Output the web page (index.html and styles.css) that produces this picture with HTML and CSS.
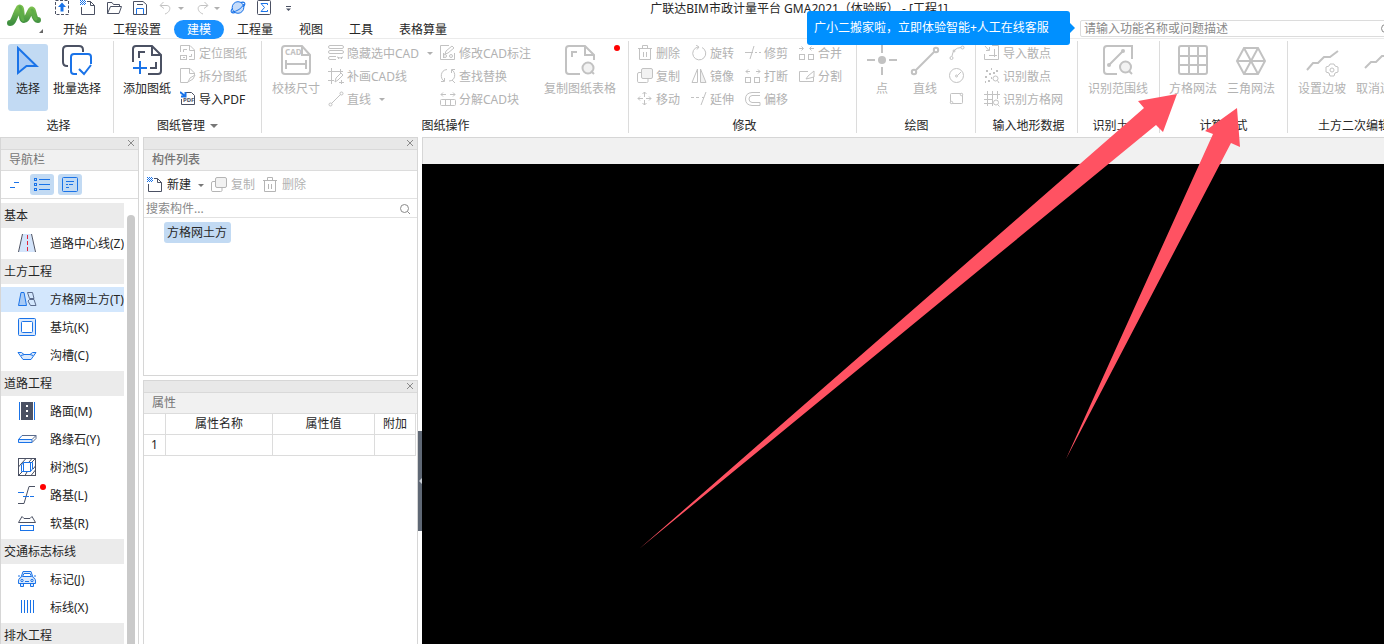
FILE: index.html
```html
<!DOCTYPE html>
<html lang="zh-CN">
<head>
<meta charset="utf-8">
<title>广联达BIM市政计量平台 GMA2021</title>
<link rel="stylesheet" href="styles.css">
</head>
<body>
<svg class="defs" aria-hidden="true">
  <symbol id="new" viewBox="0 0 16 16"><path d="M1.500 7V14.500H14.500V5.500L10.500 1.500H7"/><path d="M10.500 1.500V5.500H14.500"/><path class="b" d="M0 .5h5M1 1.500h5M0 2.500h5M1 3.500h5M0 4.500h5" stroke-dasharray="1 1"/></symbol>
  <symbol id="copy" viewBox="0 0 16 16"><path d="M5 4.500H2Q.5 4.500 .5 6V13.500Q.5 14.500 2 14.500H9.500Q11 14.500 11 13.500V11"/><rect class="pale" x="4.500" y=".5" width="11" height="10" rx="1.500"/></symbol>
  <symbol id="trash" viewBox="0 0 16 16"><path d="M1 3.500H15M5.500 3.500V.5H10.500V3.500M2.500 3.500V14.500H13.500V3.500M6.500 7V12M9.500 7V12"/></symbol>
  <symbol id="close" viewBox="0 0 8 8"><path d="M1 1L7 7M7 1L1 7"/></symbol>
  <symbol id="lens" viewBox="0 0 12 12"><circle cx="5.500" cy="5.500" r="4"/><path d="M8.500 8.500L11 11"/></symbol>
</svg>

<header class="header">
  <div class="brand">
    <svg width="36" height="26" viewBox="0 0 36 26" aria-label="Logo">
      <defs><linearGradient id="g" x1="0" y1="0" x2="0" y2="1"><stop offset="0" stop-color="#7cc04f"/><stop offset="1" stop-color="#3f8f40"/></linearGradient></defs>
      <path d="M4 21C8 21 9 12 13 6C17 3 14 18 18 18C21 18 22 13 25 8C28 5 27 18 32 18" fill="none" stroke="url(#g)" stroke-width="6" stroke-linecap="round" stroke-linejoin="round"/>
      <path d="M14 5C16 7 15 15 17 18M26 8C28 9 27 15 30 17" fill="none" stroke="#5fae48" stroke-width="3" stroke-linecap="round"/>
    </svg>
    <i class="corner"></i>
  </div>
  <div class="head-main">
    <div class="titlebar">
      <nav class="quick">
        <button aria-label="上传"><svg class="ic dark" viewBox="0 0 16 16"><rect x="1.500" y=".5" width="13" height="14" stroke-dasharray="3 1.500"/><path class="solid" d="M8 2.500L12 7H9.500V11.500H6.500V7H4Z"/></svg></button>
        <button aria-label="新建"><svg class="ic dark"><use href="#new"/></svg></button>
        <button aria-label="打开"><svg class="ic dark" viewBox="0 0 16 16"><path d="M1.500 13.500V2.500H6L7.500 4.500H13.500V6.500M1.500 13.500L4.500 6.500H15.500L13 13.500Z"/></svg></button>
        <button aria-label="保存"><svg class="ic dark" viewBox="0 0 16 16"><path d="M1.500 1.500H11L14.500 4.500V14.500H1.500ZM5 4.500H11"/><path class="b" d="M4.500 14V8.500H11.500V14"/></svg></button>
        <button aria-label="撤销" class="split off"><svg class="ic" viewBox="0 0 16 16"><path d="M5.500 2L2 5.500L6 8.500M2.500 5.500H8C13.500 5 13 12 7 14"/></svg><i class="caret"></i></button>
        <button aria-label="重做" class="split off"><svg class="ic" viewBox="0 0 16 16"><path d="M10.500 2L14 5.500L10 8.500M13.500 5.500H8C2.500 5 3 12 9 14"/></svg><i class="caret"></i></button>
        <button aria-label="三维"><svg class="ic blue" viewBox="0 0 16 16"><ellipse cx="8" cy="7.500" rx="8" ry="3" transform="rotate(-35 8 7.500)"/><circle class="tint" cx="8" cy="7.500" r="5.800"/><path d="M2 12Q10 11 14 4"/></svg></button>
        <button aria-label="汇总"><svg class="ic dark" viewBox="0 0 16 16"><rect x="1.500" y=".5" width="13" height="14" rx="1"/><path class="b" d="M11.500 5V3.500H5L8.500 7.500L5 11.500H11.500V10"/></svg></button>
        <button aria-label="更多"><svg class="ic dark" viewBox="0 0 16 16"><path d="M4 6.500H9"/><path class="ink" d="M4 8.500H9L6.500 11Z"/></svg></button>
      </nav>
      <h1>广联达BIM市政计量平台 GMA2021（体验版） - [工程1]</h1>
    </div>
    <div class="tabrow">
      <nav class="tabs">
        <button>开始</button><button>工程设置</button><button class="active">建模</button><button>工程量</button><button>视图</button><button>工具</button><button>表格算量</button>
      </nav>
      <label class="find"><input type="text" aria-label="搜索功能" placeholder="请输入功能名称或问题描述"><svg class="lens"><use href="#lens"/></svg></label>
      <div class="tip">广小二搬家啦，立即体验智能+人工在线客服</div>
    </div>
  </div>
</header>

<section class="ribbon">
  <div class="group g-select">
    <div class="tools">
      <button class="big on"><svg viewBox="0 0 30 30" class="blue w2"><path class="tint2" d="M5 3L23.500 21H13.500L5 28Z"/></svg>选择</button>
      <button class="big wide"><svg viewBox="0 0 30 30" class="dark w2"><path d="M6 21H5Q1 21 1 17V5Q1 1 5 1H17Q21 1 21 5V7"/><path class="b" d="M15 29H12Q9 29 9 26V12Q9 9 12 9H26Q29 9 29 12V19M17 24L22 29L29 20"/></svg>批量选择</button>
    </div>
    <h2>选择</h2>
  </div>
  <div class="group g-draw">
    <div class="tools">
      <button class="big wide"><svg viewBox="0 0 30 30" class="dark w2"><path d="M1 17V4Q1 1 4 1H20L29 10V26Q29 29 26 29H16M20 1V10H29M7 13V7H13M24 17V23H18"/><path class="b" d="M8 16V29M1 23H15"/></svg>添加图纸</button>
      <div class="stack">
        <button class="off"><svg class="ic" viewBox="0 0 16 16"><path d="M.5 7V.5H10L14.500 5V14.500H9M9.500 1V5.500H14.500M3.500 7V4.500H7M11.500 9V11.500H9"/><rect x=".5" y="10.500" width="6" height="4"/><path d="M3 12.500H5"/></svg>定位图纸</button>
        <button class="off"><svg class="ic" viewBox="0 0 16 16"><path d="M8 14.500H.5V.5H10L14.500 5V7M9.500 1V5.500H14.500M8 14L10 10L15 7L13 11Z"/></svg>拆分图纸</button>
        <button><svg class="ic dark" viewBox="0 0 16 16"><path d="M6 1.500H11.500L14.500 4.500V13.500H1.500V8"/><path class="b w2" d="M0 1L5 5M5.500 1V5.500H1"/><text x="3" y="11" class="mini">PDF</text></svg>导入PDF</button>
      </div>
    </div>
    <h2>图纸管理<i class="caret"></i></h2>
  </div>
  <div class="group g-ops">
    <div class="tools">
      <button class="big wide off"><svg viewBox="0 0 30 30" class="w2"><path d="M21 1H4Q1 1 1 4V26Q1 29 4 29H26Q29 29 29 26V10ZM21 1V10H29M5 15V24M25 15V24M5 19H25"/><text x="4" y="10" class="cad">CAD</text></svg>校核尺寸</button>
      <div class="stack">
        <button class="off"><svg class="ic" viewBox="0 0 16 16"><rect x=".5" y=".5" width="15" height="3" rx="1.500"/><rect x=".5" y="5.500" width="15" height="3" rx="1.500"/><path d="M8 11.500H2Q.5 11.500 .5 13Q.5 14.500 2 14.500H8M9 12Q12 14 15 12M10 14L11 13M14 14L13 13"/></svg>隐藏选中CAD<i class="caret"></i></button>
        <button class="off"><svg class="ic" viewBox="0 0 16 16"><path d="M3.500 0V12.500H6M0 3.500H15M12.500 1V6M3.500 12V16M0 12.500H3M7 14L8 10L13 5L15 7L10 12ZM13.500 12V16M11 14.500H16"/></svg>补画CAD线</button>
        <button class="off"><svg class="ic" viewBox="0 0 16 16"><circle cx="2.500" cy="13.500" r="1.500"/><circle cx="13.500" cy="2.500" r="1.500"/><path d="M3.500 12.500L12.500 3.500"/></svg>直线<i class="caret"></i></button>
      </div>
      <div class="stack s-edit">
        <button class="off"><svg class="ic" viewBox="0 0 16 16"><path d="M9 .5H.5V14.500H14.500V8M5 9L6 6L12 1L14 3L8 8Z"/><circle cx="5" cy="11" r="1.500"/><circle cx="11" cy="11" r="1.500"/><path d="M3.500 13V8"/></svg>修改CAD标注</button>
        <button class="off"><svg class="ic" viewBox="0 0 16 16"><path d="M7 1.500C0 2 0 11 4 13M4.500 10V13.500H1M9 13C16 13 16 4 12 2M11.500 5V1.500H15M12 12L15 15"/></svg>查找替换</button>
        <button class="off"><svg class="ic" viewBox="0 0 16 16"><path d="M1 3.500H6M3 1.500L1 3.500L3 5.500M10 3.500H15M13 1.500L15 3.500L13 5.500"/><rect x=".5" y="8.500" width="15" height="6" rx="1"/><path d="M5.500 8V14M10.500 8V14"/></svg>分解CAD块</button>
      </div>
      <button class="big table off"><svg viewBox="0 0 30 30" class="w2"><path d="M15 29H4Q1 29 1 26V4Q1 1 4 1H20L29 10V15M20 1V10H29M7 12V7H12"/><circle class="pale" cx="23" cy="23" r="5.500"/><path d="M26 26L29 29"/></svg>复制图纸表格<i class="dot"></i></button>
    </div>
    <h2>图纸操作</h2>
  </div>
  <div class="group g-modify">
    <div class="tools">
      <div class="stack">
        <button class="off"><svg class="ic"><use href="#trash"/></svg>删除</button>
        <button class="off"><svg class="ic"><use href="#copy"/></svg>复制</button>
        <button class="off"><svg class="ic" viewBox="0 0 16 16"><path d="M7.500 1V6M7.500 9V14M1 7.500H6M9 7.500H14M5.500 3L7.500 1L9.500 3M5.500 12L7.500 14L9.500 12M3 5.500L1 7.500L3 9.500M12 5.500L14 7.500L12 9.500"/></svg>移动</button>
      </div>
      <div class="stack">
        <button class="off"><svg class="ic" viewBox="0 0 16 16"><path d="M7 2A6.500 6.500 0 1 0 11 2.500M5 0L8 2L6 4.500"/></svg>旋转</button>
        <button class="off"><svg class="ic" viewBox="0 0 16 16"><path d="M6.500 1V14.500H1Z"/><path class="pale" d="M9.500 1V14.500H15Z"/></svg>镜像</button>
        <button class="off"><svg class="ic" viewBox="0 0 16 16"><path d="M0 6.500H3M5 6.500H8M10 14L15 1M11 6.500H13"/></svg>延伸</button>
      </div>
      <div class="stack">
        <button class="off"><svg class="ic" viewBox="0 0 16 16"><path d="M0 7.500H8M5 14L9 1M10 7.500H12M14 7.500H16"/></svg>修剪</button>
        <button class="off"><svg class="ic" viewBox="0 0 16 16"><rect x=".5" y="9.500" width="5" height="5"/><rect x="9.500" y="9.500" width="5" height="5"/><path d="M1 3.500H5M3 1.500L1 3.500L3 5.500M11 3.500H15M13 1.500L15 3.500L13 5.500"/></svg>打断</button>
        <button class="off"><svg class="ic" viewBox="0 0 16 16"><path d="M15 1.500H7Q.5 2 .5 8Q.5 14 7 14.500H15V11.500H7Q4 11 4 8Q4 5 7 4.500H15"/></svg>偏移</button>
      </div>
      <div class="stack">
        <button class="off"><svg class="ic" viewBox="0 0 16 16"><rect x=".5" y="9.500" width="5" height="5"/><rect x="9.500" y="9.500" width="5" height="5"/><path d="M0 3.500H4M2.500 1.500L4.500 3.500L2.500 5.500M11 3.500H15M12.500 1.500L10.500 3.500L12.500 5.500"/></svg>合并</button>
        <button class="off"><svg class="ic" viewBox="0 0 16 16"><path d="M9 3.500H.5V13.500H14.500V9M7 11L9 8L15 3V9Z"/></svg>分割</button>
      </div>
    </div>
    <h2>修改</h2>
  </div>
  <div class="group g-paint">
    <div class="tools">
      <button class="big off"><svg viewBox="0 0 30 30" class="w2"><path d="M15 0V8M15 22V30M0 15H8M22 15H30"/><circle class="ink" cx="15" cy="15" r="4"/></svg>点</button>
      <button class="big off"><svg viewBox="0 0 30 30" class="w2"><circle cx="4" cy="27" r="2.200"/><circle cx="26" cy="5" r="2.200"/><path d="M6 25L24 7"/></svg>直线</button>
      <div class="stack">
        <button class="off" aria-label="弧线"><svg class="ic" viewBox="0 0 16 16"><circle cx="2.500" cy="13" r="1.500"/><circle cx="13.500" cy="2.500" r="1.500"/><circle cx="5" cy="6" r="1"/><path d="M3 11Q4 3 12 2.500"/></svg></button>
        <button class="off" aria-label="圆"><svg class="ic" viewBox="0 0 16 16"><circle cx="7.500" cy="7.500" r="7"/><circle cx="7.500" cy="8" r="1"/><path d="M8.500 7.500L12 4"/></svg></button>
        <button class="off" aria-label="矩形"><svg class="ic" viewBox="0 0 16 16"><rect x="1.500" y="2.500" width="12" height="10" rx="1"/><circle class="white" cx="2.500" cy="11.500" r="1.200"/><circle class="white" cx="12.500" cy="3.500" r="1.200"/></svg></button>
      </div>
    </div>
    <h2>绘图</h2>
  </div>
  <div class="group g-terrain">
    <div class="tools">
      <div class="stack">
        <button class="off"><svg class="ic" viewBox="0 0 16 16"><path d="M8 .5H14.500V14.500H.5V9M1 1L5 5.500M5.500 2V5.500H2M10.500 4V12M5 10.500H13"/></svg>导入散点</button>
        <button class="off"><svg class="ic" viewBox="0 0 16 16"><path class="w2" d="M2 3h2M7 1h1M12 3h2M5 6h2M1 9h2M9 5h2M4 13h2M7 10h1M1 14h1" /><circle cx="11.500" cy="10.500" r="2.500"/><path d="M13.500 12.500L15 15"/></svg>识别散点</button>
        <button class="off"><svg class="ic" viewBox="0 0 16 16"><path d="M3.500 0V15M8.500 0V15M13.500 0V8M0 3.500H16M0 8.500H9M0 12.500H8"/><circle class="white" cx="12" cy="11.500" r="2.500"/><path d="M14 14L15.500 15.500"/></svg>识别方格网</button>
      </div>
    </div>
    <h2>输入地形数据</h2>
  </div>
  <div class="group g-range">
    <div class="tools">
      <button class="big range off"><svg viewBox="0 0 30 30" class="w2"><path d="M14 29H4Q1 29 1 26V4Q1 1 4 1H29V14M6 20L20 6"/><circle class="ink" cx="6" cy="20" r="2"/><circle class="ink" cx="20" cy="6" r="2"/><circle class="pale" cx="22.500" cy="22" r="5.500"/><path d="M26 26L29 29"/></svg>识别范围线</button>
    </div>
    <h2>识别土方</h2>
  </div>
  <div class="group g-calc">
    <div class="tools">
      <button class="big wide off"><svg viewBox="0 0 30 30" class="w2"><rect x="1" y="1" width="28" height="28" rx="2"/><path d="M11 1V29M20 1V29M1 11H29M1 20H29"/></svg>方格网法</button>
      <button class="big wide off"><svg viewBox="0 0 30 30" class="w2"><path d="M1 16L8 3H22L29 16L22 29H8ZM1 16H29M8 3L22 29M22 3L8 29"/></svg>三角网法</button>
    </div>
    <h2>计算方式</h2>
  </div>
  <div class="group g-slope">
    <div class="tools">
      <button class="big wide off"><svg viewBox="0 0 30 30" class="w2"><path d="M0 25L6 18H11L17 12H23L31 6"/><g class="w1"><circle cx="25" cy="25" r="2"/><path d="M23 19H27L28 21L31 22V27L28 28L27 31H23L22 28L19 27V22L22 21Z"/></g></svg>设置边坡</button>
      <button class="big wide off"><svg viewBox="0 0 30 30" class="w2"><path d="M0 23L6 17H11L17 11H23L30 6"/></svg>取消边坡</button>
    </div>
    <h2>土方二次编辑</h2>
  </div>
</section>

<main class="work">
  <aside class="panel nav">
    <div class="strip"><button aria-label="关闭"><svg><use href="#close"/></svg></button></div>
    <h3>导航栏</h3>
    <div class="modes">
      <button aria-label="折叠"><svg class="ic blue" viewBox="0 0 16 16"><path d="M8 5.500H13M4 10.500H9"/></svg></button>
      <button class="on" aria-label="列表"><svg class="ic blue" viewBox="0 0 16 16"><path d="M5 2.500H16M5 7.500H16M5 12.500H16"/><rect x=".5" y="1.500" width="2" height="2"/><rect x=".5" y="6.500" width="2" height="2"/><rect x=".5" y="11.500" width="2" height="2"/></svg></button>
      <button class="on" aria-label="详情"><svg class="ic blue" viewBox="0 0 16 16"><rect x=".5" y=".5" width="15" height="14" rx="1"/><path d="M4 4.500H12M4 7.500H6M7 7.500H11M4 10.500H7"/></svg></button>
    </div>
    <div class="tree">
      <ul>
        <li class="cat">基本</li>
        <li><svg class="nic dark" viewBox="0 0 20 20"><path class="fillonly" d="M6 1H14L18 19H2Z"/><path d="M5.500 1L1.500 19M14.500 1L18.500 19"/><path class="red" d="M10.500 2V19" stroke-dasharray="4 2"/></svg>道路中心线(Z)</li>
        <li class="cat">土方工程</li>
        <li class="sel"><svg class="nic blue" viewBox="0 0 20 20"><path class="tint2" d="M4 3.500H7L9.500 16.500H1.500Z"/><g class="slate"><path d="M10.500 3.500H15.500L17 9.500H12.500ZM12.500 10.500H17L19 16.500H13.500L11 12Z"/></g></svg>方格网土方(T)</li>
        <li><svg class="nic blue" viewBox="0 0 20 20"><rect class="tintn" x="1.500" y="1.500" width="17" height="17" rx="1"/><rect class="white" x="4.500" y="4.500" width="11" height="11" rx="1"/></svg>基坑(K)</li>
        <li><svg class="nic blue" viewBox="0 0 20 20"><path class="tintn" d="M1 7.500H4.500L7 9.500H13L15.500 7.500H19L14 14.500H6Z"/><path d="M4 10.500L7.500 9.500M13 9.500L16 10.500"/></svg>沟槽(C)</li>
        <li class="cat">道路工程</li>
        <li><svg class="nic blue" viewBox="0 0 20 20"><path d="M2.500 1V19M17.500 1V19"/><path class="road" d="M4 1H16V19H4Z"/><path class="wline" d="M10 4V17" stroke-dasharray="2 3"/></svg>路面(M)</li>
        <li><svg class="nic blue" viewBox="0 0 20 20"><path class="tintn" d="M1.500 10.500H15V13.500H1.500Z"/><path d="M1.500 10.500L5 6.500"/><path class="slate" d="M5 6.500H19L15 10.500M15 13.500L19 9.500V6.500"/></svg>路缘石(Y)</li>
        <li><svg class="nic dark" viewBox="0 0 20 20"><rect x="1.500" y="1.500" width="17" height="17"/><path d="M1.500 10L4 7M1.500 18.500L6 14M4 7L9 1.500M12 5L15 1.500M14 6L18.500 1.500M16 12L18.500 9M8 18.500L10 15M14 18.500L18.500 13"/><path class="b" d="M6.500 5.500H15.500V12L13.500 14.500H4.500V8ZM6.500 5.500V14.500M13.500 14.500V5.500"/></svg>树池(S)</li>
        <li><svg class="nic dark" viewBox="0 0 20 20"><path d="M1 18.500H7L12 1.500H18"/><path class="b" d="M1 7.500H7M6 11.500H12M13 11.500H17"/></svg>路基(L)<i class="dot"></i></li>
        <li><svg class="nic dark" viewBox="0 0 20 20"><path d="M1.500 9.500L5 3.500L7 5.500H13L15 3.500L18.500 9.500Z"/><rect class="b" x="3.500" y="12.500" width="13" height="5"/></svg>软基(R)</li>
        <li class="cat">交通标志标线</li>
        <li><svg class="nic blue" viewBox="0 0 20 20"><path class="tintn" d="M4 8.500L6 2.500H14L16 8.500Q19 9 18.500 14.500H1.500Q1 9 4 8.500ZM3.500 14.500V17.500H6.500V14.500M13.500 14.500V17.500H16.500V14.500M1 7H3M17 7H19"/><path class="white" d="M5.500 7.500L7 4.500H13L14.500 7.500Z"/><circle cx="5" cy="11.500" r="1.200"/><circle cx="15" cy="11.500" r="1.200"/><path d="M8 12.500H12"/></svg>标记(J)</li>
        <li><svg class="nic blue" viewBox="0 0 20 20"><path d="M4.500 3V16M7.500 3V16M10.500 3V16M13.500 3V16M16.500 3V16"/></svg>标线(X)</li>
        <li class="cat">排水工程</li>
      </ul>
      <div class="thumb"></div>
    </div>
  </aside>

  <div class="side">
    <section class="panel parts">
      <div class="strip"><button aria-label="关闭"><svg><use href="#close"/></svg></button></div>
      <h3 class="strong">构件列表</h3>
      <div class="bar">
        <button><svg class="ic dark"><use href="#new"/></svg>新建<i class="caret tiny"></i></button>
        <button class="off"><svg class="ic"><use href="#copy"/></svg>复制</button>
        <button class="off"><svg class="ic"><use href="#trash"/></svg>删除</button>
      </div>
      <label class="search"><input type="text" aria-label="搜索构件" placeholder="搜索构件..."><svg class="lens"><use href="#lens"/></svg></label>
      <ul class="items"><li>方格网土方</li></ul>
    </section>
    <section class="panel props">
      <div class="strip"><button aria-label="关闭"><svg><use href="#close"/></svg></button></div>
      <h3>属性</h3>
      <table>
        <colgroup><col class="c1"><col class="c2"><col class="c3"><col class="c4"></colgroup>
        <thead><tr><th></th><th>属性名称</th><th>属性值</th><th>附加</th></tr></thead>
        <tbody><tr><td>1</td><td></td><td></td><td></td></tr></tbody>
      </table>
    </section>
  </div>
  <div class="splitter"><button aria-label="收起面板"><i></i></button></div>
  <div class="stage"><div class="stage-top"></div><div class="canvas"></div></div>
</main>

<svg class="arrows" viewBox="639 94 602 456" aria-hidden="true">
  <polygon points="1177,94 1138,101 1144,108 639,549 1156,125 1163,132"/>
  <polygon points="1237,108 1205,131 1213,134 1066,459 1231,143 1240,147"/>
</svg>
</body>
</html>
```
FILE: styles.css
```css
* { box-sizing: border-box; }

body {
  margin: 0;
  height: 100vh;
  display: flex;
  flex-direction: column;
  overflow: hidden;
  position: relative;
  background: #fff;
  color: #262626;
  font: 12px/16px "Noto Sans", "Noto Sans CJK SC", sans-serif;
}

button {
  padding: 0;
  border: 0;
  background: none;
  color: inherit;
  font: inherit;
  white-space: nowrap;
}

input {
  border: 0;
  padding: 0;
  outline: 0;
  background: none;
  font: inherit;
  min-width: 0;
  flex: 1;
}

input::placeholder { color: #8a8a8a; opacity: 1; }
h1, h2, h3, ul { margin: 0; padding: 0; font: inherit; list-style: none; }

/* Icons */
svg { fill: none; stroke: currentColor; flex: none; }
.defs { position: absolute; width: 0; height: 0; }
.ic { width: 16px; height: 16px; }
.nic { width: 20px; height: 20px; margin-bottom: 1px; }
.dark { color: #4b5163; }
.blue { color: #1a73e8; }
.b { stroke: #1a73e8; }
.w1 { stroke-width: 1; }
.w2 { stroke-width: 2; }
.solid { fill: #1a73e8; stroke: none; }
.ink { fill: currentColor; stroke: none; }
.tint { fill: #c5dcfa; }
.tint2 { fill: #a9cbf5; }
.tintn { fill: #dbe9fc; }
.fillonly { fill: #d3e4fb; stroke: none; }
.pale { fill: #f2f2f2; }
.white { fill: #fff; }
.red { stroke: #e0243a; stroke-width: 1; }
.slate { stroke: #5a6b8c; }
.road { fill: #4b5163; stroke: none; }
.wline { stroke: #fff; stroke-width: 2; }
.mini { font-size: 6px; font-weight: 700; fill: currentColor; stroke: none; }
.cad { font-size: 8px; font-weight: 700; fill: currentColor; stroke: none; }
.lens { width: 12px; height: 12px; color: #8a8a8a; }

.caret {
  flex: none;
  border: 3px solid transparent;
  border-top: 3px solid #777;
  border-bottom: 0;
}
h2 .caret { border-width: 4px 4px 0; }
.off .caret { border-top-color: #b0b0b0; }
.caret.tiny { border-width: 3px 3px 0; }

.dot {
  position: absolute;
  width: 6px;
  height: 6px;
  border-radius: 50%;
  background: #f00;
}

/* Header */
.header {
  display: flex;
  height: 39px;
  flex: none;
  border-bottom: 1px solid #ebebeb;
}
.brand { width: 50px; padding: 2px 0 0 6px; position: relative; flex: none; }
.brand svg { stroke: none; }
.corner {
  position: absolute;
  right: 7px;
  bottom: 5px;
  border: 2px solid #666;
  border-top-color: transparent;
  border-left-color: transparent;
}
.head-main { flex: 1; min-width: 0; }
.titlebar { display: flex; height: 20px; }
.quick { display: flex; gap: 10px; padding-left: 4px; width: 240px; flex: none; }
.quick button { display: flex; height: 16px; }
.quick .split { align-items: center; gap: 4px; color: #b5b5b5; }
h1 { flex: 1; text-align: center; padding: 1px 76px 0 0; white-space: nowrap; }

.tabrow { display: flex; justify-content: space-between; position: relative; }
.tabs { display: flex; }
.tabs button { height: 19px; padding: 0 13px; border-radius: 10px; }
.tabs .active { background: #1890ff; color: #fff; }
.find {
  display: flex;
  align-items: center;
  width: 318px;
  height: 17px;
  margin-right: -14px;
  padding: 0 5px 0 3px;
  border: 1px solid #dcdcdc;
  border-radius: 2px;
}
.tip {
  position: absolute;
  right: 314px;
  top: -9px;
  z-index: 2;
  width: 263px;
  height: 34px;
  padding: 0 7px;
  line-height: 34px;
  white-space: nowrap;
  border-radius: 3px;
  background: #0090ff;
  color: #fff;
}
.tip::after {
  content: "";
  position: absolute;
  left: 100%;
  top: 12px;
  border: 5px solid transparent;
  border-left-color: #0090ff;
  border-right: 0;
}

/* Ribbon */
.ribbon { display: flex; flex: none; height: 98px; overflow: hidden; }
.group {
  position: relative;
  flex: none;
  display: flex;
  flex-direction: column;
  justify-content: space-between;
  padding: 3px 0;
}
.group::after {
  content: "";
  position: absolute;
  right: 0;
  top: 2px;
  bottom: 4px;
  width: 1px;
  background: #dcdcdc;
}
.tools { display: flex; }
h2 { display: flex; justify-content: center; align-items: center; gap: 5px; padding-right: 5px; }
.off { color: #b2b2b2; }
.off svg { color: #c2c2c2; }
.big {
  position: relative;
  display: flex;
  flex-direction: column;
  align-items: center;
  gap: 6px;
  width: 40px;
  height: 67px;
  margin-top: 2px;
  padding-top: 1px;
  border-radius: 3px;
}
.big svg { width: 30px; height: 30px; overflow: visible; }
.big.on { background: #c2daf3; }
.big.wide { width: 58px; }
.big.table { width: 84px; }
.big.range { width: 80px; }
.big .dot { right: 2px; top: 1px; }
.stack { display: flex; flex-direction: column; }
.stack button { display: flex; align-items: center; gap: 3px; height: 23px; }
.stack .ic { margin-bottom: 1px; }
.stack .caret { margin-left: 5px; }

.g-select { width: 114px; padding-left: 8px; }
.g-draw { width: 148px; padding-left: 4px; }
.g-draw .stack { margin-left: 4px; }
.g-ops { width: 367px; padding-left: 5px; }
.g-ops .stack { margin-left: 3px; }
.g-ops .s-edit { margin-left: 7px; }
.g-ops .table { margin-left: 7px; }
.g-modify { width: 228px; padding-left: 8px; }
.g-modify .tools { gap: 11px; }
.g-paint { width: 119px; padding-left: 5px; }
.g-paint .tools { gap: 3px; }
.g-paint .stack { margin-left: 1px; }
.g-terrain { width: 102px; padding-left: 8px; }
.g-range { width: 82px; }
.g-calc { width: 128px; padding-left: 4px; }
.g-slope { width: 132px; padding-left: 5px; }

/* Work area */
.work { display: flex; flex: 1; min-height: 0; }
.panel { border: 1px solid #d6d6d6; background: #fff; display: flex; flex-direction: column; }
.strip {
  display: flex;
  justify-content: flex-end;
  align-items: flex-start;
  height: 12px;
  flex: none;
  padding: 1px 3px 0 0;
  background: #e8e8e8;
  border-bottom: 1px solid #d9d9d9;
}
.strip button { display: flex; }
.strip svg { width: 8px; height: 8px; color: #8a8a8a; }
h3 {
  flex: none;
  height: 21px;
  padding-left: 8px;
  line-height: 20px;
  color: #757575;
  background: #f1f1f1;
  border-bottom: 1px solid #dcdcdc;
}
.strong { font-weight: 500; }

.nav { width: 139px; flex: none; border-bottom: 0; }
.modes {
  display: flex;
  align-items: center;
  gap: 4px;
  height: 28px;
  flex: none;
  padding-left: 1px;
  border-bottom: 1px solid #dcdcdc;
}
.modes button { display: grid; place-items: center; width: 24px; height: 21px; padding-top: 1px; border-radius: 3px; }
.modes .on { background: #c2daf3; }
.tree { display: flex; flex: 1; min-height: 0; padding-top: 4px; overflow: hidden; }
.tree ul { width: 123px; display: flex; flex-direction: column; gap: 3px; }
.tree li {
  position: relative;
  display: flex;
  align-items: center;
  gap: 13px;
  height: 25px;
  flex: none;
  padding-left: 16px;
  white-space: nowrap;
  overflow: hidden;
}
.tree .cat { padding-left: 3px; background: #ebebeb; }
.tree .sel { background: #d3e7fd; }
.tree .dot { left: 39px; top: 1px; }
.thumb { width: 8px; margin: 12px 0 0 3px; border-radius: 4px 4px 0 0; background: #cacaca; }

.side { width: 275px; margin-left: 4px; flex: none; display: flex; flex-direction: column; gap: 4px; }
.parts { height: 239px; flex: none; }
.props { flex: 1; border-bottom: 0; }
.bar { display: flex; align-items: center; height: 28px; flex: none; padding: 1px 0 0 3px; border-bottom: 1px solid #e2e2e2; }
.bar button { display: flex; align-items: center; gap: 4px; margin-right: 7px; }
.bar .caret { margin-left: 3px; }
.bar .off svg { color: #b5b5b5; }
.search { display: flex; align-items: center; height: 19px; flex: none; padding: 1px 6px 0 2px; border-bottom: 1px solid #e2e2e2; }
.items { padding: 4px 20px; display: flex; }
.items li { padding: 3px 4px 2px 3px; border-radius: 3px; background: #c2daf3; }

table { width: 272px; table-layout: fixed; border-collapse: separate; border-spacing: 0; }
.c1 { width: 22px; }
.c2 { width: 107px; }
.c3 { width: 102px; }
th, td {
  height: 21px;
  padding: 0;
  text-align: center;
  font-weight: 400;
  line-height: 20px;
  border-right: 1px solid #dcdcdc;
  border-bottom: 1px solid #dcdcdc;
}

.splitter { width: 4px; flex: none; padding-top: 294px; }
.splitter button { display: grid; place-items: center; width: 4px; height: 100px; background: #5f6875; }
.splitter i { border: 3px solid transparent; border-right-color: #c9ced6; border-left: 0; }
.stage { flex: 1; min-width: 0; display: flex; flex-direction: column; }
.stage-top { height: 27px; background: #f1f1f1; border-top: 1px solid #d6d6d6; border-left: 1px solid #d6d6d6; }
.canvas { flex: 1; background: #000; }

.arrows {
  position: absolute;
  left: 639px;
  top: 94px;
  width: 602px;
  height: 456px;
  z-index: 3;
  fill: #ff5262;
  stroke: none;
  pointer-events: none;
}
```
